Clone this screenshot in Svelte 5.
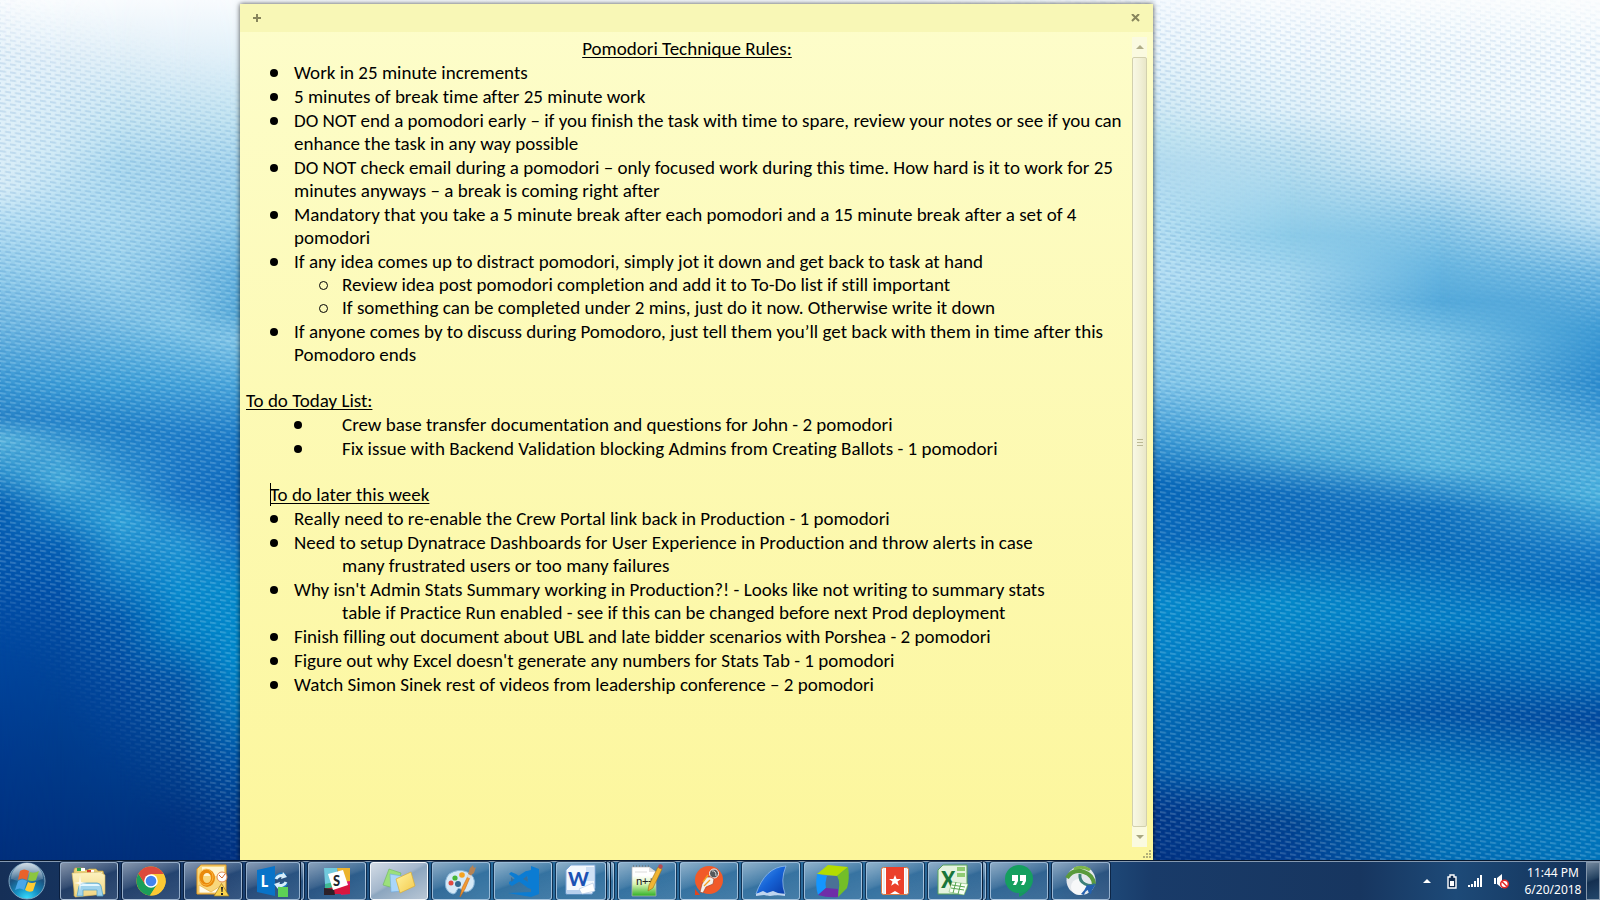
<script>
  const wallpaper = [
    { from: 0, to: 0, stops: '#fafcfe 0px,#e8f3fa 55px,#d9edf7 187px,#b8dff3 219px,#8fcaea 274px,#6ab4e0 329px,#3a98d4 384px,#2a85c8 417px,#58b4dd 439px,#2f93cf 472px,#0560b4 505px,#0559b0 549px,#004da6 603px,#003e94 713px,#002f7c 860px' },
    { from: 0, to: 3.75, stops: '#f9fcfe 0px,#e5f1f9 55px,#cfe9f5 150px,#b0dbf1 219px,#94cdeb 274px,#6cb4e0 329px,#3c9cd6 384px,#2684ca 420px,#41a0d5 450px,#45aada 480px,#1a83c8 515px,#0560b4 545px,#0050a8 590px,#00479d 650px,#003a8a 760px,#002f7c 860px' },
    { from: 3.75, to: 7.5, stops: '#f8fbfe 0px,#e2f0f8 55px,#c6e5f2 121px,#abd8ee 165px,#a9d8ef 219px,#98d0ec 274px,#7cc0e5 318px,#3ea0d8 384px,#2181c8 428px,#2c8fd0 472px,#2fa2d9 521px,#0f7cc5 576px,#0058ac 620px,#00479d 686px,#003886 795px,#002f7c 860px' },
    { from: 7.5, to: 11.25, stops: '#f8fbfe 0px,#e0eff8 60px,#c3e3f1 121px,#a8d5ed 165px,#9cd0eb 219px,#84c3e6 274px,#80c5e7 325px,#44a2d9 384px,#1f7dc8 435px,#1774c4 494px,#1f92d2 545px,#0a8ccf 590px,#0280c6 630px,#0055a6 680px,#00408f 760px,#003380 820px,#002f7c 860px' },
    { from: 11.25, to: 14.7, stops: '#f8fbfe 0px,#dfeff8 60px,#c0e2f0 121px,#a4d3ec 165px,#8fcae8 219px,#66b2de 274px,#5aabd9 313px,#80c4e6 340px,#4aa5da 384px,#1c7ac6 439px,#0d68bb 494px,#1474c4 538px,#068acb 592px,#0089cc 658px,#0373bb 713px,#0055a6 757px,#003b8a 812px,#003080 860px' },
    { from: 15, to: 72, stops: '#f6fafe 0px,#eaf5fb 55px,#d0e9f4 110px,#bfe3f0 137px,#b3dbef 165px,#b5dff2 219px,#b5def3 274px,#9dd4ee 329px,#80c4e8 384px,#3a98d4 439px,#0869ba 483px,#0868ba 538px,#0488cb 603px,#0380c6 658px,#036ab4 713px,#0059a8 768px,#00388a 806px,#003181 860px' },
    { from: 72, to: 80.6, stops: '#fafcfe 0px,#f2f9fd 55px,#e0f1f9 110px,#c0e2f1 148px,#a5d6ec 192px,#8ccbe8 236px,#a0d5ee 274px,#98d3ed 351px,#78c4e6 411px,#4ba8d8 455px,#106dbc 494px,#0866b8 538px,#048aca 603px,#0380c6 658px,#0263b0 713px,#0268b4 768px,#00428f 823px,#003c8f 860px' },
    { from: 80.6, to: 90, stops: '#fbfdfe 0px,#edf7fc 110px,#cde8f6 165px,#8fcae9 219px,#6ab7e1 263px,#55aadb 302px,#78c2e6 340px,#6dc0e4 406px,#57b4de 466px,#1173c0 510px,#086ab9 549px,#037fc6 620px,#0262b1 675px,#0053a5 713px,#0270b8 768px,#0074ba 823px,#006cb4 860px' },
    { from: 90, to: 100, stops: '#fbfdfe 0px,#f2f9fd 110px,#e0f1fa 165px,#bfe2f4 219px,#70b8e2 274px,#3f9bd4 329px,#2c8bcd 384px,#4ba6da 439px,#4db3de 494px,#1a7ec8 549px,#0767b8 581px,#0375bf 620px,#0068b5 675px,#00479b 719px,#0060ad 768px,#0075bb 823px,#0074ba 860px' }
  ];

  const rules = [
    { lines: ['Work in 25 minute increments'] },
    { lines: ['5 minutes of break time after 25 minute work'] },
    { lines: ['DO NOT end a pomodori early – if you finish the task with time to spare, review your notes or see if you can', 'enhance the task in any way possible'] },
    { lines: ['DO NOT check email during a pomodori – only focused work during this time. How hard is it to work for 25', 'minutes anyways – a break is coming right after'] },
    { lines: ['Mandatory that you take a 5 minute break after each pomodori and a 15 minute break after a set of 4', 'pomodori'] },
    {
      lines: ['If any idea comes up to distract pomodori, simply jot it down and get back to task at hand'],
      sub: ['Review idea post pomodori completion and add it to To-Do list if still important', 'If something can be completed under 2 mins, just do it now. Otherwise write it down']
    },
    { lines: ['If anyone comes by to discuss during Pomodoro, just tell them you’ll get back with them in time after this', 'Pomodoro ends'] }
  ];

  const today = [
    'Crew base transfer documentation and questions for John - 2 pomodori',
    'Fix issue with Backend Validation blocking Admins from Creating Ballots - 1 pomodori'
  ];

  const later = [
    ['Really need to re-enable the Crew Portal link back in Production - 1 pomodori'],
    ['Need to setup Dynatrace Dashboards for User Experience in Production and throw alerts in case', 'many frustrated users or too many failures'],
    ["Why isn't Admin Stats Summary working in Production?! - Looks like not writing to summary stats", 'table if Practice Run enabled - see if this can be changed before next Prod deployment'],
    ['Finish filling out document about UBL and late bidder scenarios with Porshea - 2 pomodori'],
    ["Figure out why Excel doesn't generate any numbers for Stats Tab - 1 pomodori"],
    ['Watch Simon Sinek rest of videos from leadership conference – 2 pomodori']
  ];

  const apps = [
    { id: 'explorer', name: 'Windows Explorer' },
    { id: 'chrome', name: 'Google Chrome' },
    { id: 'outlook', name: 'Outlook' },
    { id: 'lync', name: 'Lync', stack: 1 },
    { id: 'slack', name: 'Slack' },
    { id: 'sticky', name: 'Sticky Notes', active: true },
    { id: 'paint', name: 'Paint' },
    { id: 'vscode', name: 'Visual Studio Code' },
    { id: 'word', name: 'Word', stack: 2 },
    { id: 'notepad', name: 'Notepad++' },
    { id: 'postman', name: 'Postman' },
    { id: 'wireshark', name: 'Wireshark' },
    { id: 'dynatrace', name: 'Dynatrace' },
    { id: 'wunderlist', name: 'Wunderlist' },
    { id: 'excel', name: 'Excel', stack: 1 },
    { id: 'hangouts', name: 'Hangouts' },
    { id: 'anyconnect', name: 'AnyConnect' }
  ];
</script>

{#snippet icon(id)}
  <svg class="app-icon" viewBox="0 0 58 38" aria-hidden="true">
    {#if id === 'explorer'}
      <path d="M14 8l1-2h9l1 2h3l1-1h7l2 2h5l1 4v19l-30 2z" fill="#e9cf78" stroke="#c9a53c" stroke-width=".6" />
      <path d="M17 6h4v3h-4z" fill="#28a745" /><path d="M21 6h4v3h-4zM30 8h4v3h-4zM38 10h4v3h-4z" fill="#fff" />
      <path d="M27 8h4v3h-4z" fill="#d33a26" /><path d="M34 10h4v3h-4z" fill="#2f86d6" />
      <path d="M12 11l28-1 5 3v19l-30 3z" fill="url(#folder)" stroke="#d8b95f" stroke-width=".6" />
      <path d="M17 34l2-10q1-3 4-3h14q3 0 4 3l2 10h-6v-6H23v6z" fill="#9fd3ec" stroke="#5ba7cc" stroke-width=".8" />
      <path d="M20 24q1-2 3-2h14q2 0 3 2z" fill="#e3f7ff" />
      <path d="M20 13l1 7 6 1-6 1-1 7-1-7-5-1 5-1z" fill="#fff" opacity=".8" />
    {:else if id === 'chrome'}
      <circle cx="29" cy="19" r="14.5" fill="#fbc116" />
      <path d="M16.4 11.8A14.5 14.5 0 0 0 28 33.5L35 22.5 29 25 23 22z" fill="#1b9e5a" />
      <path d="M16.4 11.8A14.5 14.5 0 0 1 41.6 12H29l-6 10z" fill="#dc4a3d" />
      <path d="M41.8 12A14.5 14.5 0 0 1 28 33.5L35.3 22 29 12z" fill="#fcc934" />
      <circle cx="29" cy="19" r="6.8" fill="#fff" /><circle cx="29" cy="19" r="5.3" fill="#4484ef" />
    {:else if id === 'outlook'}
      <path d="M17 3h25v26l-4 3H13V7z" fill="#f8d77c" stroke="#e39a1f" />
      <path d="M18 5h22v9H18z" fill="#fff5cf" /><path d="M15 23l12 7 11-7v8H15z" fill="#fffbe8" stroke="#eab044" stroke-width=".7" />
      <ellipse cx="23" cy="16" rx="6" ry="7" fill="none" stroke="#e98a0c" stroke-width="4" />
      <ellipse cx="22" cy="15" rx="7" ry="8" fill="none" stroke="#ffc04a" stroke-width=".8" />
      <circle cx="38" cy="15" r="5" fill="#fff" stroke="#e08a50" /><path d="M35 13l3 3 3-4" stroke="#d2662a" fill="none" />
      <path d="M37.5 21.5L45 34H30z" fill="#fbd34c" stroke="#9a7b22" stroke-width=".7" />
      <path d="M37 25h2l-.5 5h-1zM37 31h2v2h-2z" fill="#222" />
    {:else if id === 'lync'}
      <path d="M11 8l18-4v30l-18-4z" fill="#0873c8" /><text x="15" y="25" class="logo" font-size="17" font-weight="bold" fill="#fff">L</text>
      <path d="M30 16a6 6 0 0 1 9-2M40 21a6 6 0 0 1-9 2" fill="none" stroke="#1878c2" stroke-width="4.5" />
      <path d="M30 17a6 6 0 0 1 8-3M40 20a6 6 0 0 1-8 3" fill="none" stroke="#d8eefb" stroke-width="3" />
      <path d="M37 10l4 5-6 2zM32 27l-4-5 6-2z" fill="#d8eefb" />
      <path d="M32 25h10v10H32z" fill="#5dd155" />
    {:else if id === 'slack'}
      <path d="M17 7l8-1 4 26-12 1z" fill="#3eb991" /><path d="M16 6h14l-4 14-9 2z" fill="#71cadd" /><path d="M29 6h13v17l-9-1z" fill="#ecb32d" />
      <path d="M35 20l7-1v13l-9 1z" fill="#e01765" /><path d="M16 27l16-3 10-1v9H16z" fill="#d8163f" /><path d="M16 26l10 1 1 6H16z" fill="#2d2027" />
      <path d="M20 12l15-4 5 15-15 5z" fill="#fff" /><text x="25" y="24" class="logo" font-size="15" font-weight="bold" fill="#20242c">S</text>
    {:else if id === 'sticky'}
      <path d="M19 7l12 4-4 16-14-4z" fill="#9cdf7b" stroke="#6bb85a" stroke-width=".6" />
      <path d="M20 12l12 2 1 15-12 1z" fill="#a9d6fa" stroke="#6ea9dd" stroke-width=".6" />
      <path d="M26 17l15-7 4 14-15 7z" fill="url(#yellow)" stroke="#d8ac37" stroke-width=".7" />
    {:else if id === 'paint'}
      <path d="M17 12q9-6 18-2 9 4 7 13-2 6-8 7-3 0-5-3-3-2-4 1-1 4-4 4-5-1-7-6-2-8 3-14z" fill="#d5e9f7" stroke="#8bb7d9" />
      <circle cx="23" cy="16" r="2.6" fill="#46b638" /><circle cx="30" cy="13" r="2.8" fill="#f5a321" /><circle cx="19" cy="21" r="2.5" fill="#e24a40" /><circle cx="26" cy="22" r="3" fill="#32698f" />
      <path d="M39 13l-6 14-5 8 2-9 7-14z" fill="#f19a32" stroke="#c86a19" stroke-width=".6" />
      <path d="M36 12l2-6 3-3 1 3 2-1-2 6-4 3z" fill="#b48355" /><path d="M36 12l4 2-1 3-4-2z" fill="#ddd" />
    {:else if id === 'vscode'}
      <path d="M37 4l8 3v25l-8 3-23-4 23-1z" fill="#0b7cd3" />
      <path d="M33 9l4-1v19l-3-1-19-14 2-2 5 2 12 8z" fill="#0b7cd3" /><path d="M36 9v4L18 24l-3-2v-2l17-11z" fill="#0b7cd3" />
      <path d="M33 14v5l-4-2zM17 15v5l3-2z" fill="#376f9d" />
    {:else if id === 'word'}
      <path d="M15 3h24v23l-3 6H10V8z" fill="#f4f8fd" stroke="#7ca6d8" /><path d="M30 5h8v14h-8z" fill="#cfe0f5" />
      <path d="M11 28h20v4H11z" fill="#b8d0ee" /><text x="12" y="24" class="logo" font-size="23" font-weight="bold" fill="#1c52b4">W</text>
      <path d="M23 27l14-6 2 8-13 3z" fill="#fff" stroke="#a8c1df" stroke-width=".6" />
    {:else if id === 'notepad'}
      <path d="M14 5h17l7 5v24H14z" fill="url(#notepad)" stroke="#b6b6b6" stroke-width=".7" /><path d="M31 5v5h7z" fill="#ddd" />
      <path d="M15 4h17" stroke="#666" stroke-dasharray="1 2" /><path d="M17 10h12" stroke="#b5b5b5" stroke-width=".5" />
      <text x="18" y="23" class="logo" font-size="12" fill="#222">n++</text>
      <path d="M40 5l4 2-9 19-5 3 1-6z" fill="#f0b532" stroke="#9b6e1a" stroke-width=".6" /><circle cx="42.5" cy="4.5" r="2.2" fill="#b64a52" />
    {:else if id === 'postman'}
      <circle cx="29" cy="18" r="14" fill="#f15a29" /><path d="M15 27v6h5z" fill="#e2441c" />
      <circle cx="34" cy="11.5" r="4.5" fill="#56585b" stroke="#fff" /><path d="M32 9q4-1 4 5" stroke="#ddd" fill="none" />
      <path d="M31 15l3 2-1 5-7 3-3 6-3-1 2-8 4-7z" fill="#f3f1ec" stroke="#a3482e" stroke-width=".7" /><path d="M30 18l-6 6M28 13l-5 7" stroke="#f6a11d" stroke-width="1.3" />
    {:else if id === 'wireshark'}
      <path d="M44 4Q23 5 14 32l7-1 3 2 5-2 5 2 9-1Q38 18 44 4z" fill="url(#fin)" stroke="#9cc3ef" stroke-width=".7" />
      <path d="M14 32l7-3 4 2 6-2 5 2 7 1v2l-8-1-7 1-6-1-8 1z" fill="#bfd5ef" />
    {:else if id === 'dynatrace'}
      <path d="M13 12L24 3l20 2-11 9z" fill="#b4dc00" /><path d="M33 14L44 5q2 12-1 21l-9 9 1-9q1-6-2-12z" fill="#73be28" />
      <path d="M13 12l10 2q-2 7-1 12l-8 7q-3-9-1-21z" fill="#1496ff" /><path d="M23 14h10q3 6 1 13l-12-1q-1-6 1-12z" fill="#4a7196" /><path d="M14 33l8-7 12 1v8q-10 1-20-2z" fill="#6f2da8" />
    {:else if id === 'wunderlist'}
      <rect x="15.5" y="5.5" width="27" height="27" rx="2" fill="#fff" stroke="#d87843" />
      <path d="M18 6v26M40 6v26" stroke="#ddd" /><path d="M20 5h18v27l-9-5-9 5z" fill="#eb402b" />
      <path d="M29 13l1.600 4h4.400l-3.500 2.600 1.300 4.200-3.800-2.600-3.800 2.600 1.300-4.200L23 17h4.400z" fill="#fff" />
      <path d="M20 32v-2l9-4 9 4v2z" fill="#eb402b" /><path d="M24 32l5-3 5 3z" fill="#fff" />
    {:else if id === 'excel'}
      <path d="M15 3h24v23l-3 6H10V8z" fill="#e4f3de" stroke="#58a45b" /><path d="M29 5h8v4h-8zM29 11h8v4h-8z" fill="#8fcb73" />
      <text x="13" y="26" class="logo" font-size="26" font-weight="bold" fill="#18753a">X</text>
      <path d="M24 20l16 2-4 11-15-3z" fill="#f8fff4" stroke="#6eb15f" stroke-width=".5" /><path d="M24 23l13 2M23 26l13 2M28 20l-3 11M33 21l-3 11" stroke="#57a650" />
    {:else if id === 'hangouts'}
      <path d="M29 3a14 14 0 1 1 0 28v4q14-7 14-18A14 14 0 0 0 29 3z" fill="#159a5c" /><circle cx="29" cy="17" r="14" fill="#159f5f" />
      <path d="M22 13h6v6l-2 4h-3l2-4h-3zM30 13h6v6l-2 4h-3l2-4h-3z" fill="#fff" />
    {:else}
      <circle cx="29" cy="18.5" r="14.5" fill="#e4e8ec" /><circle cx="27" cy="25" r="8" fill="#fff" opacity=".7" />
      <path d="M15 16Q21 6 32 10q9 3 10 12" fill="none" stroke="#5a9a3c" stroke-width="4" />
      <path d="M22 7q8-4 16 1" fill="none" stroke="#7cb648" stroke-width="3" />
      <path d="M28 12q-1 7 5 10t10 0" fill="none" stroke="#3c7f7a" stroke-width="3" />
      <path d="M35 23q4 1 8-1-1 4-3 6l-1 4q-3-1-3-4-3 1-4 5l-3-1q4-4 6-9z" fill="#2461b0" />
    {/if}
  </svg>
{/snippet}

{#snippet broken(lines, hang)}
  {#each lines as line, i}
    <span class="line" class:hang={hang && i > 0}>{line}</span>
  {/each}
{/snippet}

<div class="desktop">
  <div class="wallpaper" aria-hidden="true">
    {#each wallpaper as band}
      <div class="band" style="background-image: linear-gradient({band.stops}); mask-image: linear-gradient(to right, {band.to ? 'transparent' : '#000'} {band.from}%, #000 {band.to}%)"></div>
    {/each}
    <svg class="weave" width="100%" height="100%" viewBox="0 0 1600 900" preserveAspectRatio="none">
      <defs>
        <pattern id="dashes" width="10" height="8" patternUnits="userSpaceOnUse" patternTransform="skewY(8)">
          <path d="M0 1h6M5 5h6M-5 5h6" stroke="#d9f3ff" stroke-opacity=".4" />
          <path d="M5 3h6M0 7h6M-5 3h6" stroke="#0058b0" stroke-opacity=".25" />
        </pattern>
        <filter id="soft" x="-20%" y="-50%" width="140%" height="200%"><feGaussianBlur stdDeviation="24" /></filter>
        <mask id="density" maskUnits="userSpaceOnUse" x="0" y="0" width="1600" height="900">
          <path d="M0 0h1600v900H0z" fill="#fff" />
          <g filter="url(#soft)">
            <path d="M-60-60h1720V30L1150 10 240 110 0 30z" />
            <path d="M-60 590l110 30 200 240v80H-60z" />
            <path d="M1140 120l180 70 300 140v50l-280-90-200-110z" />
            <path d="M1140 850l140 20v60h-140z" />
          </g>
        </mask>
      </defs>
      <rect width="1600" height="900" fill="url(#dashes)" mask="url(#density)" />
    </svg>
  </div>

  <main>
    <section class="note" aria-label="Sticky note">
      <header>
        <button class="glyph" aria-label="New note"><svg width="8" height="8" viewBox="0 0 8 8"><path d="M3 0h2v3h3v2H5v3H3V5H0V3h3z" fill="#87855c" /></svg></button>
        <button class="glyph" aria-label="Delete note"><svg width="9" height="8" viewBox="0 0 9 8"><path d="M1 0l7 7M8 0L1 7" stroke="#87855c" stroke-width="2" /></svg></button>
      </header>
      <div class="body">
        <article>
          <h1><u>Pomodori Technique Rules:</u></h1>
          <ul class="bullets">
            {#each rules as rule}
              <li>
                {@render broken(rule.lines, false)}
                {#if rule.sub}
                  <ul class="circles">
                    {#each rule.sub as s}<li>{s}</li>{/each}
                  </ul>
                {/if}
              </li>
            {/each}
          </ul>
          <h2><u>To do Today List:</u></h2>
          <ul class="bullets wide">
            {#each today as item}<li>{item}</li>{/each}
          </ul>
          <h2 class="indent"><span class="caret"></span><u>To do later this week</u></h2>
          <ul class="bullets">
            {#each later as lines}<li>{@render broken(lines, true)}</li>{/each}
          </ul>
        </article>
        <div class="scrollbar" aria-hidden="true">
          <div class="arrow"><svg width="8" height="4" viewBox="0 0 8 4"><path d="M4 0l4 4H0z" fill="#b0ad88" /></svg></div>
          <div class="thumb"><i></i></div>
          <div class="arrow"><svg width="8" height="4" viewBox="0 0 8 4"><path d="M0 0h8L4 4z" fill="#a8a680" /></svg></div>
        </div>
      </div>
      <svg class="grip" width="8" height="8" viewBox="0 0 8 8" aria-hidden="true"><path d="M6 0h2v2H6zM3 3h2v2H3zM6 3h2v2H6zM0 6h2v2H0zM3 6h2v2H3zM6 6h2v2H6z" fill="#b3b078" /></svg>
    </section>
  </main>

  <footer>
    <button class="start" aria-label="Start">
      <svg width="38" height="38" viewBox="0 0 38 38">
        <defs>
          <radialGradient id="orb" cx=".5" cy="1" r=".95"><stop offset="0" stop-color="#3be0ff" /><stop offset=".35" stop-color="#1590c4" /><stop offset=".7" stop-color="#1c527f" /><stop offset="1" stop-color="#5c87a8" /></radialGradient>
          <linearGradient id="gloss" x2="0" y2="1"><stop offset="0" stop-color="#fff" stop-opacity=".7" /><stop offset="1" stop-color="#fff" stop-opacity=".1" /></linearGradient>
          <linearGradient id="folder" x2="0" y2="1"><stop offset="0" stop-color="#fdf2bf" /><stop offset="1" stop-color="#f0d583" /></linearGradient>
          <linearGradient id="yellow" x2="1" y2="1"><stop offset="0" stop-color="#fff4a0" /><stop offset="1" stop-color="#f4ca4c" /></linearGradient>
          <linearGradient id="notepad" x2="0" y2="1"><stop offset=".3" stop-color="#fff" /><stop offset=".6" stop-color="#d6f3b0" /><stop offset="1" stop-color="#2fb024" /></linearGradient>
          <linearGradient id="fin" x2="1" y2="1"><stop offset="0" stop-color="#4a9cf4" /><stop offset=".5" stop-color="#1663d6" /><stop offset="1" stop-color="#0a3aa6" /></linearGradient>
        </defs>
        <circle cx="19" cy="19" r="18" fill="url(#orb)" stroke="#7fa5c0" />
        <path d="M3 17a16 16 0 0 1 32 0q-16 6-32 0z" fill="url(#gloss)" />
        <path d="M12 9q4-3 9 0l-2 9q-5-3-9 0z" fill="#e8622a" /><path d="M22 10q4 2 9-1l-3 9q-4 2-8 0z" fill="#8cc63f" />
        <path d="M10 19q4-3 9 0l-3 9q-4-3-9 0z" fill="#4aa7e8" /><path d="M20 20q4 2 8 0l-3 9q-4 2-8-1z" fill="#ffcc33" />
      </svg>
    </button>
    <nav aria-label="Open programs">
      {#each apps as app}
        <div class="slot">
          <button class="task" class:active={app.active} aria-label={app.name}>{@render icon(app.id)}</button>
          {#each Array(app.stack ?? 0) as _}<span class="edge"></span>{/each}
        </div>
      {/each}
    </nav>
    <div class="tray">
      <button class="glyph" aria-label="Show hidden icons"><svg width="8" height="4" viewBox="0 0 8 4"><path d="M4 0l4 4H0z" fill="#fff" /></svg></button>
      <svg width="10" height="15" viewBox="0 0 10 15" aria-hidden="true"><path d="M3 1h4v2h2v11H1V3h2z" fill="#102c50" stroke="#fff" stroke-width="1.4" /><path d="M3 7h4v5H3z" fill="#fff" /></svg>
      <svg width="15" height="12" viewBox="0 0 15 12" aria-hidden="true"><path d="M0 10h2v2H0zM3 9h2v3H3zM6 6h2v6H6zM9 3h2v9H9zM12 0h2v12h-2z" fill="#fff" /></svg>
      <svg width="15" height="15" viewBox="0 0 15 15" aria-hidden="true"><path d="M0 4h2v6H0zM3 4l5-4v14l-5-4z" fill="#fff" /><circle cx="10.5" cy="10" r="3.8" fill="#fff" stroke="#e32828" stroke-width="1.5" /><path d="M8 7.5l5 5" stroke="#e32828" stroke-width="1.5" /></svg>
      <time>11:44 PM<br />6/20/2018</time>
    </div>
    <button class="show" aria-label="Show desktop"></button>
  </footer>
</div>

<style>
  :global(body) { margin: 0; }
  .desktop {
    position: relative;
    display: flex;
    flex-direction: column;
    min-height: 100vh;
    overflow: hidden;
    font-family: Calibri, Carlito, Lato, sans-serif;
    color: #000;
    background: #003080;
  }
  button { padding: 0; border: 0; background: none; font: inherit; }
  .wallpaper, .band, .weave { position: absolute; inset: 0; }
  main {
    position: relative;
    flex: 1;
    display: grid;
    grid-template-columns: 240fr 913fr 447fr;
    padding-top: 4px;
  }
  .note {
    grid-column: 2;
    min-width: 0;
    position: relative;
    display: flex;
    flex-direction: column;
    background: linear-gradient(#fdfdcb, #fcf69c);
    box-shadow: 0 0 5px rgba(0, 0, 0, .7);
  }
  header {
    display: flex;
    justify-content: space-between;
    align-items: center;
    height: 28px;
    padding: 0 13px;
    background: #f8f7b6;
  }
  .glyph { display: flex; }
  .body { flex: 1; display: flex; padding: 5px 6px 13px 6px; }
  article {
    flex: 1;
    min-width: 0;
    font-size: 19px;
    line-height: 23px;
    white-space: nowrap;
    font-variant-ligatures: none;
  }
  h1, h2 { margin: 0; font-size: inherit; font-weight: normal; }
  h1 { text-align: center; padding-right: 4px; }
  h2 { margin-top: 23px; }
  h2.indent { padding-left: 24px; }
  u { text-underline-offset: 2px; text-decoration-thickness: 1px; text-decoration-skip-ink: none; }
  .caret { display: inline-block; width: 1px; height: 23px; margin-right: -1px; vertical-align: bottom; background: #000; }
  ul { margin: 0; padding: 0; list-style: none; }
  .line { display: block; }
  .hang { padding-left: 48px; }
  .bullets > li { position: relative; padding: 1px 0 0 48px; }
  .bullets > li::before {
    content: '';
    position: absolute;
    left: 24px;
    top: 9px;
    width: 8px;
    height: 8px;
    border-radius: 50%;
    background: #000;
  }
  .wide > li { padding-left: 96px; }
  .wide > li::before { left: 48px; }
  .circles > li { position: relative; padding-left: 48px; }
  .circles > li::before {
    content: '';
    position: absolute;
    left: 25px;
    top: 8px;
    width: 7px;
    height: 7px;
    border: 1px solid #000;
    border-radius: 50%;
  }
  .scrollbar { width: 15px; display: flex; flex-direction: column; background: #fafae0; }
  .arrow { height: 20px; display: flex; align-items: center; justify-content: center; }
  .thumb {
    flex: 1;
    display: flex;
    align-items: center;
    justify-content: center;
    border: 1px solid #d2d0ae;
    border-radius: 2px;
    background: linear-gradient(to right, #f8f8e4, #f2f1d8 50%, #e9e7c8);
  }
  .thumb i { width: 6px; height: 7px; background: repeating-linear-gradient(#bcb994 0 1px, transparent 1px 3px); }
  .grip { position: absolute; right: 2px; bottom: 2px; }
  footer {
    position: relative;
    display: flex;
    height: 38px;
    border-top: 1px solid #8599b0;
    box-shadow: 0 -1px #06162c;
    margin-top: 1px;
    background: linear-gradient(to right, #152f57 0, #183c6d 14%, #286a9b 30%, #2b6b9c 55%, #24598a 66%, #193b69 72%, #173660 85%, #1d4a78 91%, #122f55);
  }
  .start { width: 60px; padding-left: 8px; }
  .start svg { display: block; }
  nav { display: flex; gap: 4px; }
  .slot { width: 58px; display: flex; gap: 1px; }
  .task, .edge {
    box-sizing: border-box;
    height: 38px;
    border: 1px solid rgba(205, 225, 245, .65);
    border-radius: 3px;
    box-shadow: 0 0 0 1px rgba(5, 20, 45, .65);
    background: linear-gradient(160deg, rgba(255, 255, 255, .48), rgba(255, 255, 255, .14) 45%, rgba(255, 255, 255, .06) 50%, rgba(255, 255, 255, .13));
  }
  .task { flex: 1; min-width: 0; overflow: hidden; }
  .active { background: linear-gradient(150deg, #d3dce6, #a4b7cc 45%, #8ca6bf 50%, #b9c7d5); border-color: #f3f7fb; }
  .edge { width: 3px; border-left: 0; border-radius: 0 3px 3px 0; }
  .app-icon { display: block; width: 58px; height: 38px; margin: -1px; }
  .tray { margin-left: auto; display: flex; align-items: center; gap: 11px; color: #fff; }
  .tray .glyph { margin-right: 5px; }
  time { width: 66px; font: 12px/17px "Noto Sans", sans-serif; text-align: center; }
  .show {
    width: 14px;
    border: 1px solid #8396ab;
    background: linear-gradient(160deg, #73889e, #22405f 45%, #142f50 50%, #24476b);
  }
</style>
